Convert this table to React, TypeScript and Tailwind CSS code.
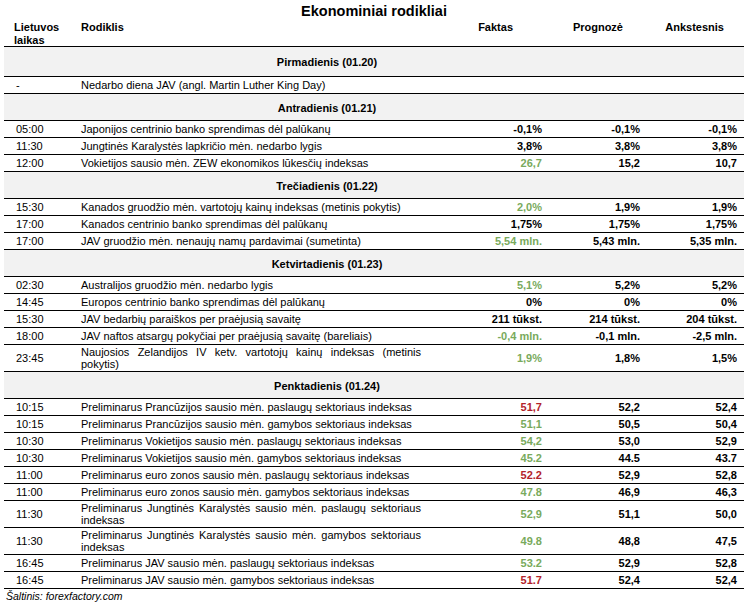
type Tone = "g" | "r" | "k"

type Row = {
  time: string
  name: string
  fact?: string
  tone?: Tone
  prog?: string
  prev?: string
  tall?: boolean
}

type Section = { day: string; first?: boolean; rows: Row[] }

const sections: Section[] = [
  {
    day: "Pirmadienis (01.20)",
    first: true,
    rows: [{ time: "-", name: "Nedarbo diena JAV (angl. Martin Luther King Day)" }],
  },
  {
    day: "Antradienis (01.21)",
    rows: [
      { time: "05:00", name: "Japonijos centrinio banko sprendimas dėl palūkanų", fact: "-0,1%", tone: "k", prog: "-0,1%", prev: "-0,1%" },
      { time: "11:30", name: "Jungtinės Karalystės lapkričio mėn. nedarbo lygis", fact: "3,8%", tone: "k", prog: "3,8%", prev: "3,8%" },
      { time: "12:00", name: "Vokietijos sausio mėn. ZEW ekonomikos lūkesčių indeksas", fact: "26,7", tone: "g", prog: "15,2", prev: "10,7" },
    ],
  },
  {
    day: "Trečiadienis (01.22)",
    rows: [
      { time: "15:30", name: "Kanados gruodžio mėn. vartotojų kainų indeksas (metinis pokytis)", fact: "2,0%", tone: "g", prog: "1,9%", prev: "1,9%" },
      { time: "17:00", name: "Kanados centrinio banko sprendimas dėl palūkanų", fact: "1,75%", tone: "k", prog: "1,75%", prev: "1,75%" },
      { time: "17:00", name: "JAV gruodžio mėn. nenaujų namų pardavimai (sumetinta)", fact: "5,54 mln.", tone: "g", prog: "5,43 mln.", prev: "5,35 mln." },
    ],
  },
  {
    day: "Ketvirtadienis (01.23)",
    rows: [
      { time: "02:30", name: "Australijos gruodžio mėn. nedarbo lygis", fact: "5,1%", tone: "g", prog: "5,2%", prev: "5,2%" },
      { time: "14:45", name: "Europos centrinio banko sprendimas dėl palūkanų", fact: "0%", tone: "k", prog: "0%", prev: "0%" },
      { time: "15:30", name: "JAV bedarbių paraiškos per praėjusią savaitę", fact: "211 tūkst.", tone: "k", prog: "214 tūkst.", prev: "204 tūkst." },
      { time: "18:00", name: "JAV naftos atsargų pokyčiai per praėjusią savaitę (bareliais)", fact: "-0,4 mln.", tone: "g", prog: "-0,1 mln.", prev: "-2,5 mln." },
      { time: "23:45", name: "Naujosios Zelandijos IV ketv. vartotojų kainų indeksas (metinis pokytis)", fact: "1,9%", tone: "g", prog: "1,8%", prev: "1,5%", tall: true },
    ],
  },
  {
    day: "Penktadienis (01.24)",
    rows: [
      { time: "10:15", name: "Preliminarus Prancūzijos sausio mėn. paslaugų sektoriaus indeksas", fact: "51,7", tone: "r", prog: "52,2", prev: "52,4" },
      { time: "10:15", name: "Preliminarus Prancūzijos sausio mėn. gamybos sektoriaus indeksas", fact: "51,1", tone: "g", prog: "50,5", prev: "50,4" },
      { time: "10:30", name: "Preliminarus Vokietijos sausio mėn. paslaugų sektoriaus indeksas", fact: "54,2", tone: "g", prog: "53,0", prev: "52,9" },
      { time: "10:30", name: "Preliminarus Vokietijos sausio mėn. gamybos sektoriaus indeksas", fact: "45.2", tone: "g", prog: "44.5", prev: "43.7" },
      { time: "11:00", name: "Preliminarus euro zonos sausio mėn. paslaugų sektoriaus indeksas", fact: "52.2", tone: "r", prog: "52,9", prev: "52,8" },
      { time: "11:00", name: "Preliminarus euro zonos sausio mėn. gamybos sektoriaus indeksas", fact: "47.8", tone: "g", prog: "46,9", prev: "46,3" },
      { time: "11:30", name: "Preliminarus Jungtinės Karalystės sausio mėn. paslaugų sektoriaus indeksas", fact: "52,9", tone: "g", prog: "51,1", prev: "50,0", tall: true },
      { time: "11:30", name: "Preliminarus Jungtinės Karalystės sausio mėn. gamybos sektoriaus indeksas", fact: "49.8", tone: "g", prog: "48,8", prev: "47,5", tall: true },
      { time: "16:45", name: "Preliminarus JAV sausio mėn. paslaugų sektoriaus indeksas", fact: "53.2", tone: "g", prog: "52,9", prev: "52,8" },
      { time: "16:45", name: "Preliminarus JAV sausio mėn. gamybos sektoriaus indeksas", fact: "51.7", tone: "r", prog: "52,4", prev: "52,4" },
    ],
  },
]

const toneClass: Record<Tone, string> = {
  g: "text-[#79aa5c]",
  r: "text-[#b3232b]",
  k: "text-black",
}

const cols = "grid grid-cols-[73px_348px_121px_98px_100px]"

function DataRow({ row }: { row: Row }) {
  return (
    <div className={`${cols} ${row.tall ? "h-[27px]" : "h-[17px]"} border-b border-black`}>
      <div className="flex items-center pl-[12px]">{row.time}</div>
      <div className="flex items-center pl-[4px] pr-[4px] leading-[12px]">
        <span className="block w-full text-justify">{row.name}</span>
      </div>
      <div className={`flex items-center justify-end pr-[4px] font-bold ${row.tone ? toneClass[row.tone] : ""}`}>{row.fact}</div>
      <div className="flex items-center justify-end pr-[4px] font-bold">{row.prog}</div>
      <div className="flex items-center justify-end pr-[7px] font-bold">{row.prev}</div>
    </div>
  )
}

export default function App() {
  return (
    <div className="w-[751px] h-[605px] bg-white pl-[4px] text-[11px] leading-[13px] text-black font-['Liberation_Sans',Arial,sans-serif]">
      <div className="w-[740px]">
        <div className="h-[20px] pt-[3px] text-center text-[14.5px] leading-[16px] font-bold">Ekonominiai rodikliai</div>
        <div className={`${cols} h-[27px] pt-[1px] border-b border-black font-bold`}>
          <div className="pl-[10px]">
            Lietuvos
            <br />
            laikas
          </div>
          <div className="pl-[4px]">Rodiklis</div>
          <div className="text-right pr-[33px]">Faktas</div>
          <div className="text-right pr-[21px]">Prognozė</div>
          <div className="text-right pr-[20px]">Ankstesnis</div>
        </div>

        {sections.map((s) => (
          <div key={s.day}>
            <div
              className={`flex items-center justify-center pr-[94px] pt-[2px] bg-[#f2f2f2] border-b border-black font-bold ${
                s.first ? "h-[30px]" : "h-[27px]"
              }`}
            >
              {s.day}
            </div>
            {s.rows.map((r, i) => (
              <DataRow key={i} row={r} />
            ))}
          </div>
        ))}

        <div className="pl-[2px] pt-[2px] text-[10.5px] leading-[11px] italic">Šaltinis: forexfactory.com</div>
      </div>
    </div>
  )
}
